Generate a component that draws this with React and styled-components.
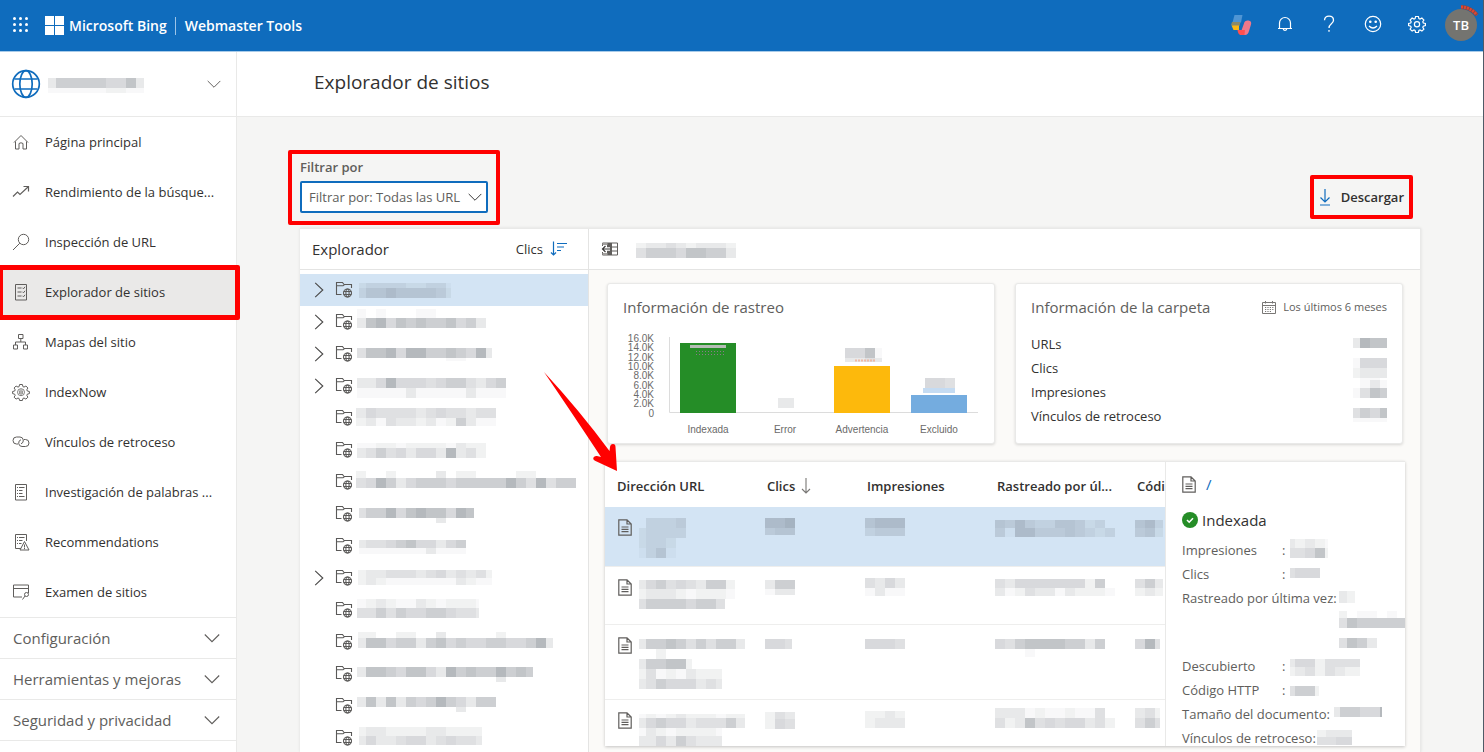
import React from "react";
import styled, { createGlobalStyle, css } from "styled-components";

const blue = "#0f6cbd";
const red = "#ff0000";
const line = "#e9e9e8";

const GlobalStyle = createGlobalStyle`
  * { box-sizing: border-box; }
  body {
    margin: 0;
    font-family: "Open Sans", "Noto Sans", sans-serif;
    font-size: 13px;
    line-height: 20px;
    color: #323130;
    background: #f5f5f4;
  }
  button, select { font: inherit; color: inherit; }
  svg { display: block; flex: none; }
`;

/* ---------- redacted values, drawn as mosaics ---------- */

const shades = [0, 0.04, 0.08, 0.13, 0.18, 0.22, 0.28, 0.34, 0.41, 0.48];

/* rows: [y, height, one shade digit per 10px cell, optional end x] */
function Mosaic({ width, height, start = 0, end, rows, x, y }) {
  return (
    <svg width={width} height={height} x={x} y={y} aria-hidden="true" shapeRendering="crispEdges">
      {rows.flatMap(([top, h, cells, rowEnd]) =>
        [...cells].map((c, i) => {
          const left = Math.max(i * 10, start);
          const right = Math.min(i * 10 + 10, rowEnd ?? end ?? width);
          if (c === "0" || right <= left) return null;
          return (
            <rect key={`${top}-${i}`} x={left} y={top} width={right - left} height={h}
              fill="#4c545e" fillOpacity={shades[+c]} />
          );
        })
      )}
    </svg>
  );
}

/* ---------- icons ---------- */

function Icon({ size = 18, color = "#605e5c", w = 1, children }) {
  return (
    <svg width={size} height={size} viewBox="0 0 18 18" fill="none" stroke={color} strokeWidth={w} aria-hidden="true">
      {children}
    </svg>
  );
}

const gearPath =
  "M7.6 1.5h2.8l.5 2.1 1.1.5 1.9-1.1 2 2-1.1 1.8.5 1.2 2.1.5v2.1l-2.1.6-.5 1.1 1.1 1.9-2 1.9-1.9-1.1-1.1.5-.5 2h-2.8l-.5-2-1.1-.5-1.9 1.1-2-1.9 1.1-1.9-.5-1.1-2.1-.6V8.5l2.1-.5.5-1.2L2.1 5l2-2L6 4.1l1.1-.5z";

const HomeIcon = () => (
  <Icon><path d="M2 9.5 9 2.5l7 7M3.5 8.5v7.500h3.500v-5.500q2-1.500 4 0v5.500h3.500V8.500" /></Icon>
);
const TrendIcon = () => (
  <Icon w={1.2}><path d="M1 13.500 5.500 9l2.500 2.500L16 4M11.500 3.500H16.500V8.500" /></Icon>
);
const SearchIcon = () => (
  <Icon><circle cx="11.5" cy="6.5" r="5.2" /><path d="M7.800 10.200 1 17" /></Icon>
);
const ChecklistIcon = () => (
  <Icon>
    <path d="M3.500 1.500h11v15.500h-11z" />
    <path d="M5.500 5h4M5.500 9h4M5.500 13h4" />
    <path d="m10.500 4.800 1 1 1.500-2M10.500 8.800l1 1 1.500-2M10.500 12.800l1 1 1.500-2" />
  </Icon>
);
const SitemapIcon = () => (
  <Icon>
    <path d="M6.500 1.500h4.500v4H6.500zM1.500 12h4v4h-4zM11.500 12h4v4h-4zM8.800 5.500v3.500M3.500 12V9h10v3" />
  </Icon>
);
const IndexNowIcon = () => (
  <Icon>
    <path d={gearPath} />
    <circle cx="9" cy="9.200" r="3.500" strokeWidth="0.8" />
    <path d="M9 6.500v5.500M7.700 7.500v3.500M10.300 7.500v3.500" strokeWidth="0.8" />
  </Icon>
);
const LinkIcon = () => (
  <Icon>
    <path d="M6 11H4.500a3.500 3.500 0 0 1 0-7H8a3.500 3.500 0 0 1 1 6.800" />
    <path d="M12 6.500h1.500a3.500 3.500 0 0 1 0 7H10a3.500 3.500 0 0 1-1-6.800" />
  </Icon>
);
const KeywordIcon = () => (
  <Icon>
    <path d="M3.500 1.500h11v15.500h-11z" />
    <path d="M5 4.500h1M7 4.500h5.500M5 7.500h1M7 7.500h3.500M5 10.500h1M7 10.500h3.500M5 13.500h1M7 13.500h5.500" />
  </Icon>
);
const RecommendIcon = () => (
  <Icon>
    <path d="M9 15.500H3.500v-14h11V8" />
    <path d="M5 4.500h1M7 4.500h5.500M5 7.500h1M7 7.500h3.500M5 10.500h1M7 10.500h2.500" />
    <path d="m12.500 8.500 4.500 8.500H8zM12.500 11.500v3M12.500 15v1.200" />
  </Icon>
);
const ScanIcon = () => (
  <Icon>
    <path d="M10 14H1.500V2h15v8M1.500 5.500h15" />
    <circle cx="14.500" cy="11.500" r="2" /><path d="m13 13-2.500 3.500" />
  </Icon>
);
const Chevron = ({ dir = "down", color = "#605e5c", width = 16 }) => (
  <svg width={width} height="16" viewBox="0 0 16 16" fill="none" stroke={color} strokeWidth="1.1" aria-hidden="true">
    <path d={dir === "down" ? "M.8 4.500 8 11.700l7.200-7.200" : "M4.200.8 11.800 8l-7.600 7.200"} />
  </svg>
);
const GlobeIcon = () => (
  <svg width="30" height="30" viewBox="0 0 30 30" fill="none" stroke={blue} strokeWidth="1.700" aria-hidden="true">
    <circle cx="15" cy="15" r="13.300" />
    <ellipse cx="15" cy="15" rx="6.200" ry="13.300" />
    <path d="M3.500 10h23M3.500 20h23" />
  </svg>
);
const FolderIcon = () => (
  <svg width="18" height="18" viewBox="0 0 18 18" fill="none" stroke="#5a5958" strokeWidth="1.100" aria-hidden="true">
    <path d="M6.500 13.500H1.500V1.500h6l1.500 2h7.500V7M1.500 4.800H8L9.500 3.500" />
    <circle cx="12.500" cy="12" r="4" />
    <ellipse cx="12.500" cy="12" rx="1.600" ry="4" />
    <path d="M8.700 10.500h7.600M8.700 13.500h7.600" />
  </svg>
);
const DocIcon = () => (
  <svg width="14" height="17" viewBox="0 0 14 17" fill="none" stroke="#605e5c" strokeWidth="1.200" aria-hidden="true">
    <path d="M.8.800H9l4.200 4.200v11.200H.8zM9 .800V5h4.200M3.500 8h7M3.500 10.300h7M3.500 12.600h7" />
  </svg>
);
const BellIcon = () => (
  <Icon color="#fff" w={1.2}>
    <path d="M3.500 13.500V8a5.500 5.500 0 0 1 11 0v5.500M2 13.500h14M7.200 14a1.900 1.900 0 0 0 3.600 0" />
  </Icon>
);
const HelpIcon = () => (
  <Icon color="#fff" w={1.3}>
    <path d="M4.500 5.200C4.700 2.500 6.500 1.200 9 1.200s4.500 1.600 4.500 4C13.500 8.800 9 8.800 9 13M9 15v1.700" />
  </Icon>
);
const SmileIcon = () => (
  <Icon color="#fff" w={1.2}>
    <circle cx="9" cy="9" r="7.700" />
    <path d="M5 11q4 4 8 0" />
    <circle cx="6.300" cy="6.800" r=".7" fill="#fff" /><circle cx="11.700" cy="6.800" r=".7" fill="#fff" />
  </Icon>
);
const GearIcon = () => (
  <Icon color="#fff" w={1.2}>
    <path d={gearPath} /><circle cx="9" cy="9.200" r="2.600" />
  </Icon>
);
const CopilotIcon = () => (
  <svg width="22" height="22" viewBox="0 0 22 22" aria-hidden="true">
    <path d="M4.500 2h8L11 9.500H2.500z" fill="#4f95d4" />
    <path d="M2 9h8.500l-1 4H3L1 12z" fill="#8a8a6a" />
    <path d="M1.500 12.500h7.500v4.500H3.500z" fill="#fdb813" />
    <path d="M12 16l2.500-7q1-2 4-1.500 3.500.5 2.500 4l-2 6.500q-1 4-4 4h-5z" fill="#f0788a" />
    <path d="M7.500 17h7.500l-.5 5H11q-3 0-3.500-5z" fill="#ff4f4f" />
  </svg>
);
const SortIcon = () => (
  <svg width="18" height="16" viewBox="0 0 18 16" fill="none" stroke={blue} strokeWidth="1.200" aria-hidden="true">
    <path d="M3.500.500v13M1 11.500l2.500 2.500L6 11.500M7 2.500h10M7 6h7M7 9.500h4" />
  </svg>
);
const CollapseIcon = () => (
  <svg width="18" height="14" viewBox="0 0 18 14" fill="none" aria-hidden="true">
    <path d="M1.500 4V1h15v12h-15v-3" stroke="#605e5c" />
    <path d="M6 1h5v12H6z" fill="#605e5c" />
    <path d="M1.500 1h5v2h-5zM1.500 11h5v2h-5z" fill="#a19f9d" />
    <path d="M9 7H1.500" stroke="#fff" strokeWidth="3.500" />
    <path d="M9 7H1.800M4.500 4 1.500 7l3 3" stroke="#3b3a39" strokeWidth="1.200" />
    <path d="M11 5h5.500M11 9h5.500" stroke="#605e5c" />
  </svg>
);
const CalendarIcon = () => (
  <svg width="14" height="13" viewBox="0 0 14 13" fill="none" stroke="#797775" aria-hidden="true">
    <path d="M.5 1.500h13v11H.500zM.5 4.500h13M3.500 0v2.500M10.500 0v2.500" />
    <path d="M3 6.500h8.500M3 8.500h8.500M3 10.500h6" strokeDasharray="1.200 1.200" />
  </svg>
);
const DownloadIcon = () => (
  <svg width="12" height="17" viewBox="0 0 12 17" fill="none" stroke={blue} strokeWidth="1.200" aria-hidden="true">
    <path d="M6 0v12.500M1.500 8.500 6 13l4.500-4.500M1 16h10" />
  </svg>
);
const ArrowDown = () => (
  <svg width="10" height="16" viewBox="0 0 10 16" fill="none" stroke="#797775" strokeWidth="1.100" aria-hidden="true">
    <path d="M5 0v15M1 11l4 4 4-4" />
  </svg>
);
const CheckIcon = () => (
  <svg width="16" height="16" viewBox="0 0 16 16" fill="none" aria-hidden="true">
    <circle cx="8" cy="8" r="8" fill="#258d27" />
    <path d="m5 8 2.200 2.200L11 6.200" stroke="#fff" strokeWidth="1.600" />
  </svg>
);

/* ---------- shell ---------- */

const Shell = styled.div`
  height: 100vh;
  display: flex;
  flex-direction: column;
  overflow: hidden;
  border-right: 1px solid #4f5a66;
`;
const TopBar = styled.header`
  flex: none;
  height: 52px;
  padding: 0 6px 0 13px;
  display: flex;
  align-items: center;
  color: #fff;
  background: ${blue};
  border-bottom: 1px solid #a8cbe9;
`;
const BarButton = styled.button`
  display: flex;
  align-items: center;
  justify-content: center;
  width: ${(p) => p.$width ?? 44}px;
  height: 48px;
  padding: 0 0 3px;
  border: 0;
  background: none;
`;
const Brand = styled.a`
  display: flex;
  align-items: center;
  gap: 5px;
  margin-left: 17px;
  color: #fff;
  font-size: 14px;
  font-weight: 600;
  text-decoration: none;
`;
const Product = styled.span`
  margin-left: 3px;
  padding-left: 9px;
  border-left: 1px solid #9cc4e8;
  line-height: 18px;
`;
const BarTools = styled.div`
  margin-left: auto;
  display: flex;
  align-items: center;
`;
const Avatar = styled.button`
  position: relative;
  width: 32px;
  height: 32px;
  margin: 0 0 2px 6px;
  padding: 0;
  border: 0;
  border-radius: 50%;
  background: #747470;
  color: #fff;
  font-weight: 600;
`;
const AvatarTag = styled.svg`
  position: absolute;
  top: -5px;
  right: -3px;
`;
const Body = styled.div`
  flex: 1;
  min-height: 0;
  display: flex;
`;

/* ---------- side navigation ---------- */

const Side = styled.aside`
  flex: none;
  width: 237px;
  background: #fff;
  border-right: 1px solid ${line};
`;
const SitePicker = styled.button`
  width: 100%;
  height: 65px;
  padding: 0 15px 0 11px;
  display: flex;
  align-items: center;
  gap: 5px;
  border: 0;
  border-bottom: 1px solid ${line};
  background: #fff;
`;
const Push = styled.span`
  margin-left: auto;
`;
const NavLink = styled.a`
  position: relative;
  display: flex;
  align-items: center;
  gap: 15px;
  height: 50px;
  padding: 0 12px;
  color: #323130;
  text-decoration: none;
  ${(p) => p.$active && css`background: #eae9e8;`}
`;
const Highlight = styled.span`
  position: absolute;
  z-index: 2;
  inset: ${(p) => p.$inset};
  border: ${(p) => p.$border}px solid ${red};
  border-radius: 2px;
  pointer-events: none;
`;
const NavGroup = styled.button`
  width: 100%;
  height: 41px;
  padding: 0 16px 0 13px;
  display: flex;
  align-items: center;
  justify-content: space-between;
  border: 0;
  border-top: 1px solid ${line};
  background: #fff;
  color: #605e5c;
  font-size: 15px;
  &:last-child { height: 42px; border-bottom: 1px solid ${line}; }
`;

/* ---------- main ---------- */

const Main = styled.main`
  flex: 1;
  min-width: 0;
  display: flex;
  flex-direction: column;
`;
const TitleBar = styled.div`
  flex: none;
  height: 65px;
  padding: 0 77px 4px;
  display: flex;
  align-items: center;
  background: #fff;
  border-bottom: 1px solid ${line};
`;
const Title = styled.h1`
  margin: 0;
  font-size: 19px;
  font-weight: 400;
`;
const Content = styled.div`
  flex: 1;
  min-height: 0;
  padding: 38px 62px 0 63px;
  display: flex;
  flex-direction: column;
`;
const Toolbar = styled.div`
  flex: none;
  display: flex;
  justify-content: space-between;
  align-items: flex-end;
  height: 73px;
  padding-bottom: 15px;
`;
const Filter = styled.div`
  position: relative;
  display: grid;
  gap: 4px;
  width: 188px;
  color: #605e5c;
`;
const FilterLabel = styled.label`
  font-weight: 600;
`;
const SelectBox = styled.div`
  display: grid;
  align-items: center;
  > * { grid-area: 1 / 1; }
  > svg { justify-self: end; margin-right: 6px; pointer-events: none; }
`;
const Select = styled.select`
  appearance: none;
  width: 100%;
  height: 32px;
  padding: 0 24px 0 7px;
  border: 2px solid ${blue};
  border-radius: 2px;
  background: #fff;
  outline: 0;
`;
const Download = styled.button`
  position: relative;
  display: flex;
  align-items: center;
  gap: 10px;
  height: 32px;
  margin-right: 17px;
  padding: 0;
  border: 0;
  background: none;
  font-weight: 600;
`;
const Panels = styled.div`
  flex: 1;
  min-height: 0;
  display: flex;
  background: #fbfaf8;
  border: solid ${line};
  border-width: 1px 1px 0 0;
  box-shadow: 0 0 3px rgba(0, 0, 0, 0.1);
`;
const PanelHead = styled.div`
  flex: none;
  display: flex;
  align-items: center;
  height: 41px;
  padding: 0 12px;
  background: #fff;
  border-bottom: 1px solid #e4e4e3;
`;
const Explorer = styled.section`
  flex: none;
  width: 289px;
  background: #fff;
  border-right: 1px solid #e4e4e3;
  overflow: hidden;
`;
const ExplorerTitle = styled.h2`
  margin: 0;
  font-size: 15px;
  font-weight: 400;
`;
const SortButton = styled.button`
  display: flex;
  align-items: center;
  gap: 7px;
  margin-left: auto;
  padding: 0 8px 0 0;
  border: 0;
  background: none;
`;
const Tree = styled.ul`
  margin: 0;
  padding: 4px 0 0;
  list-style: none;
`;
const TreeRow = styled.li`
  display: grid;
  grid-template-columns: 16px 17px 1fr;
  column-gap: 4px;
  align-items: center;
  height: 32px;
  padding-left: 11px;
  background: ${(p) => (p.$active ? "#d3e4f4" : "#fff")};
`;
const TreeIcon = styled.span`
  margin-left: 4px;
`;
const TreeName = styled.span`
  padding-left: 4px;
`;
const Right = styled.section`
  flex: 1;
  min-width: 0;
  display: flex;
  flex-direction: column;
`;
const HeadMosaic = styled.span`
  margin-left: 17px;
`;
const Cards = styled.div`
  flex: none;
  display: flex;
  gap: 20px;
  padding: 13px 17px 17px 18px;
`;
const Card = styled.section`
  flex: 1 1 0;
  min-width: 0;
  height: 161px;
  padding: 13px 15px;
  background: #fff;
  border: 1px solid ${line};
  border-radius: 3px;
  box-shadow: 0 1px 3px rgba(0, 0, 0, 0.14);
`;
const CardHead = styled.div`
  display: flex;
  align-items: center;
  justify-content: space-between;
  color: #605e5c;
`;
const CardTitle = styled.h2`
  margin: 0;
  font-size: 15px;
  font-weight: 400;
`;
const Period = styled.span`
  display: flex;
  align-items: center;
  gap: 7px;
  font-size: 11px;
`;
const Stats = styled.dl`
  margin: 15px 0 0;
`;
const Stat = styled.div`
  display: flex;
  justify-content: space-between;
  height: 24px;
  line-height: 24px;
`;
const StatValue = styled.dd`
  margin: 0;
`;
const Chart = styled.svg`
  margin-top: 11px;
  font-family: "Liberation Sans", sans-serif;
  font-size: 10px;
`;

/* ---------- bottom card ---------- */

const Lower = styled.div`
  position: relative;
  flex: 1;
  min-height: 0;
  margin: 0 15px 6px 16px;
  display: flex;
`;
const LowerCard = styled.div`
  flex: 1;
  min-width: 0;
  display: flex;
  overflow: hidden;
  background: #fff;
  border-top: 1px solid ${line};
  box-shadow: 0 1px 3px rgba(0, 0, 0, 0.22);
`;
const TableArea = styled.div`
  flex: 1;
  min-width: 0;
  overflow: hidden;
`;
const Table = styled.table`
  width: 100%;
  table-layout: fixed;
  border-collapse: collapse;
`;
const Th = styled.th`
  width: ${(p) => (p.$width ? `${p.$width}px` : "auto")};
  height: 45px;
  padding: 2px 0 0 12px;
  overflow: hidden;
  text-align: left;
  white-space: nowrap;
  font-weight: 600;
`;
const ThInner = styled.span`
  display: flex;
  align-items: center;
  gap: 6px;
`;
const Tr = styled.tr`
  height: ${(p) => p.$height}px;
  border-bottom: 1px solid #eeeeed;
  background: ${(p) => (p.$active ? "#d3e4f4" : "#fff")};
`;
const Td = styled.td`
  padding: 0 0 0 10px;
  overflow: hidden;
  vertical-align: top;
`;
const UrlCell = styled.div`
  display: flex;
  gap: 4px;
  padding-left: 3px;
  > svg:first-child { margin-top: 12px; }
`;
const Detail = styled.aside`
  flex: none;
  width: 240px;
  padding: 11px 0 0 16px;
  border-left: 1px solid ${line};
  color: #605e5c;
`;
const DetailUrl = styled.div`
  display: flex;
  align-items: center;
  gap: 10px;
  height: 22px;
`;
const DetailLink = styled.a`
  color: ${blue};
  font-size: 15px;
  text-decoration: none;
`;
const DetailStatus = styled.h3`
  display: flex;
  align-items: center;
  gap: 4px;
  height: 22px;
  margin: 14px 0 7px;
  color: #323130;
  font-size: 15px;
  font-weight: 400;
`;
const Facts = styled.dl`
  margin: 0;
`;
const Fact = styled.div`
  display: flex;
  height: ${(p) => p.$height}px;
  line-height: 24px;
  white-space: nowrap;
`;
const FactName = styled.dt`
  min-width: ${(p) => (p.$short ? 100 : 0)}px;
`;
const FactValue = styled.dd`
  margin: 0;
`;
const Pointer = styled.svg`
  position: absolute;
  z-index: 3;
  left: -65px;
  top: -92px;
  pointer-events: none;
`;

/* ---------- data ---------- */

const nav = [
  ["Página principal", HomeIcon],
  ["Rendimiento de la búsque...", TrendIcon],
  ["Inspección de URL", SearchIcon],
  ["Explorador de sitios", ChecklistIcon],
  ["Mapas del sitio", SitemapIcon],
  ["IndexNow", IndexNowIcon],
  ["Vínculos de retroceso", LinkIcon],
  ["Investigación de palabras ...", KeywordIcon],
  ["Recommendations", RecommendIcon],
  ["Examen de sitios", ScanIcon],
];
const groups = ["Configuración", "Herramientas y mejoras", "Seguridad y privacidad"];

const folders = [
  { open: true, active: true, start: 3, end: 95, rows: [[9, 5, "2333322331"], [14, 10, "3556555542"]] },
  { open: true, start: 1, end: 130, rows: [[3, 9, "1010001100"], [12, 10, "3785767667563"]] },
  { open: true, start: 1, end: 136, rows: [[10, 10, "47785886676583"], [20, 3, "00000000011"]] },
  { open: true, start: 1, end: 150, rows: [[8, 10, "335855545664356"], [18, 10, "111113111113111"]] },
  { start: 0, end: 140, rows: [[6, 10, "35444434544344"], [16, 8, "23143323126311"]] },
  { start: 1, end: 130, rows: [[9, 5, "1122122221322"], [14, 10, "3464535538342"]] },
  { start: 0, end: 220, rows: [[5, 7, "200200003022000022"], [12, 10, "4586356665666668648466"]] },
  { start: 3, end: 118, rows: [[10, 10, "466857877587"], [20, 5, "000000003"]] },
  { start: 3, end: 110, rows: [[10, 8, "34456755356"], [18, 6, "11111113111"]] },
  { open: true, start: 2, end: 136, rows: [[8, 8, "23344434534342"], [16, 7, "23211111113211"]] },
  { start: 1, end: 123, rows: [[5, 9, "1232113212221"], [14, 10, "4464655665443"]] },
  { start: 2, end: 197, rows: [[6, 6, "22002200300000200"], [12, 10, "37756636756556655683"]] },
  { start: 1, end: 177, rows: [[9, 10, "377657753867668676"], [19, 5, "000000000000003"]] },
  { start: 1, end: 140, rows: [[7, 10, "37373656865366"], [17, 5, "00000000003"]] },
  { start: 3, end: 126, rows: [[5, 9, "2332222332222"], [14, 9, "3533455345443"]] },
];

const urls = [
  {
    height: 59, active: true,
    url: [[11, 10, "03334", 50], [21, 10, "23333", 50], [31, 10, "2332", 40], [41, 10, "1351", 40]],
    clicks: [[11, 10, "667"], [21, 7, "455"]],
    views: [[11, 10, "5666"], [21, 8, "3444"]],
    crawled: [[13, 8, "54643355423", 110], [21, 9, "416644454323"]],
    code: [[13, 8, "563"], [21, 9, "452"]],
  },
  {
    height: 58,
    url: [[13, 9, "3564543662", 99], [22, 10, "2333212221", 99], [32, 10, "466665664", 89]],
    clicks: [[13, 9, "366"], [22, 6, "133"]],
    views: [[11, 10, "4353"], [21, 8, "1311"]],
    crawled: [[12, 9, "43555555526", 110], [21, 8, "312433132221"]],
    code: [[12, 9, "463"], [21, 8, "232"]],
  },
  {
    height: 75,
    url: [[14, 10, "36676464663"], [24, 10, "002"], [34, 10, "366772", 56], [44, 10, "241213222", 86], [54, 10, "346555343", 86]],
    clicks: [[14, 10, "554", 27]],
    views: [[14, 10, "5554"]],
    crawled: [[14, 10, "54677776636", 110], [24, 8, "0001"]],
    code: [[14, 10, "584", 25]],
  },
  {
    height: 75,
    url: [[14, 4, "12123222122"], [18, 10, "35655344463"], [28, 8, "132122221", 86], [36, 10, "335364333", 86]],
    clicks: [[12, 7, "243"], [19, 10, "254"]],
    views: [[11, 7, "2232"], [18, 10, "2333"]],
    crawled: [[8, 10, "33312112114", 110], [18, 10, "423745455342"]],
    code: [[8, 10, "342", 25], [18, 10, "464", 25]],
  },
];

const folderStats = [
  ["URLs", [[6, 10, "3877"]]],
  ["Clics", [[2, 10, "1555"], [12, 10, "2333"], [22, 2, "0110"]]],
  ["Impresiones", [[0, 8, "0131"], [8, 10, "1476"]]],
  ["Vínculos de retroceso", [[4, 10, "4657"], [14, 4, "1111"]]],
];

const facts = [
  { name: "Impresiones", short: true, h: 24, start: 5, rows: [[1, 9, "32321", 43], [10, 10, "44572", 43]] },
  { name: "Clics", short: true, h: 24, start: 5, rows: [[6, 10, "4555", 35]] },
  {
    name: "Rastreado por última vez", h: 68, start: 2,
    rows: [[5, 12, "32", 18], [25, 7, "201101"], [32, 10, "4766666"], [52, 10, "4763", 40]],
  },
  { name: "Descubierto", short: true, h: 24, start: 5, rows: [[5, 8, "35524444", 75], [13, 9, "23424322", 75]] },
  { name: "Código HTTP", short: true, h: 24, start: 5, rows: [[8, 10, "4662", 34]] },
  { name: "Tamaño del documento", h: 24, start: 4, rows: [[5, 10, "366558", 52]] },
  { name: "Vínculos de retroceso", h: 24, start: 1, rows: [[4, 7, "2333", 36], [11, 8, "4455", 36]] },
];

const ticks = ["16.0K", "14.0K", "12.0K", "10.0K", "8.0K", "6.0K", "4.0K", "2.0K", "0"];
const tickY = [14, 23, 33, 42, 51, 61, 70, 79, 89];
const bars = [
  { label: "Indexada", x: 57, top: 15, color: "#258d27" },
  { label: "Error", x: 134, top: 85, color: "#c00" },
  { label: "Advertencia", x: 211, top: 38, color: "#fdb90c" },
  { label: "Excluido", x: 288, top: 67, color: "#74acdf" },
];

function CrawlChart() {
  return (
    <Chart width="356" height="112" role="img" aria-label="Información de rastreo">
      {ticks.map((t, i) => (
        <text key={t} x="31" y={tickY[i]} textAnchor="end" fill="#6b6a69">{t}</text>
      ))}
      <path d="M46.500 9v75.500H355" fill="none" stroke="#dcdcdc" />
      {bars.map((b) => (
        <g key={b.label}>
          <rect x={b.x} y={b.top} width="56" height={85 - b.top} fill={b.color} />
          <text x={b.x + 28} y="105" textAnchor="middle" fill="#6b6a69">{b.label}</text>
        </g>
      ))}
      <path d="M67 18.500h36" stroke="#b5bdb5" strokeWidth="3" />
      <path d="M73 23.500h30M73 26.500h30" stroke="#8a7a8a" strokeWidth="1" strokeDasharray="1 2" />
      <Mosaic x={155} y={70} width={16} height={10} rows={[[0, 10, "33"]]} />
      <Mosaic x={222} y={20} width={37} height={15} rows={[[0, 10, "5571", 37], [10, 4, "3343"]]} />
      <path d="M232 32.500h21" stroke="#f0b9a4" strokeWidth="2" strokeDasharray="2 1" />
      <Mosaic x={302} y={50} width={30} height={15} rows={[[0, 15, "554"]]} />
      <path d="M300 62.500h32" stroke="#c4dbf2" strokeWidth="5" />
    </Chart>
  );
}

export default function App() {
  return (
    <Shell>
      <GlobalStyle />
      <TopBar>
        <BarButton $width={15} aria-label="Aplicaciones">
          <svg width="15" height="15" fill="#fff" aria-hidden="true">
            {[0, 6, 12].flatMap((y) => [0, 6, 12].map((x) => <circle key={`${x}-${y}`} cx={x + 1.5} cy={y + 1.5} r="1.5" />))}
          </svg>
        </BarButton>
        <Brand href="#">
          <svg width="19" height="19" fill="#fff" aria-hidden="true">
            <path d="M0 0h9v9H0zM10 0h9v9h-9zM0 10h9v9H0zM10 10h9v9h-9z" />
          </svg>
          <span>Microsoft Bing</span>
          <Product>Webmaster Tools</Product>
        </Brand>
        <BarTools>
          <BarButton aria-label="Copilot"><CopilotIcon /></BarButton>
          <BarButton aria-label="Notificaciones"><BellIcon /></BarButton>
          <BarButton aria-label="Ayuda"><HelpIcon /></BarButton>
          <BarButton aria-label="Comentarios"><SmileIcon /></BarButton>
          <BarButton aria-label="Ajustes"><GearIcon /></BarButton>
          <Avatar>
            TB
            <AvatarTag width="20" height="13" fill="none" aria-hidden="true">
              <path d="M1 3q9 0 16 8" stroke="#7b4a4a" strokeWidth="4" />
              <path d="M1 3q9 0 16 8" stroke="#e0452f" strokeWidth="3" strokeDasharray="2 1" />
            </AvatarTag>
          </Avatar>
        </BarTools>
      </TopBar>
      <Body>
        <Side>
          <SitePicker aria-label="Sitio">
            <GlobeIcon />
            <Mosaic width={98} height={18} start={2} rows={[[3, 10, "3666665573"], [13, 5, "1111112211"]]} />
            <Push><Chevron width={14} /></Push>
          </SitePicker>
          <nav>
            {nav.map(([label, I]) => {
              const active = label === "Explorador de sitios";
              return (
                <NavLink key={label} href="#" $active={active}>
                  <I />
                  {label}
                  {active && <Highlight $inset="-2px -4px -3px -2px" $border={5} />}
                </NavLink>
              );
            })}
          </nav>
          <div>
            {groups.map((g) => (
              <NavGroup key={g}>{g}<Chevron /></NavGroup>
            ))}
          </div>
        </Side>
        <Main>
          <TitleBar><Title>Explorador de sitios</Title></TitleBar>
          <Content>
            <Toolbar>
              <Filter>
                <FilterLabel htmlFor="filter">Filtrar por</FilterLabel>
                <SelectBox>
                  <Select id="filter" defaultValue="all">
                    <option value="all">Filtrar por: Todas las URL</option>
                  </Select>
                  <Chevron color="#323130" width={14} />
                </SelectBox>
                <Highlight $inset="-7px -12px -12px -12px" $border={4} />
              </Filter>
              <Download>
                <DownloadIcon />
                Descargar
                <Highlight $inset="-6px -9px -6px -9px" $border={4} />
              </Download>
            </Toolbar>
            <Panels>
              <Explorer>
                <PanelHead>
                  <ExplorerTitle>Explorador</ExplorerTitle>
                  <SortButton>Clics<SortIcon /></SortButton>
                </PanelHead>
                <Tree>
                  {folders.map((f, i) => (
                    <TreeRow key={i} $active={f.active}>
                      <span>{f.open && <Chevron dir="right" color="#4a4948" />}</span>
                      <TreeIcon><FolderIcon /></TreeIcon>
                      <TreeName>
                        <Mosaic width={221} height={32} start={f.start} end={f.end} rows={f.rows} />
                      </TreeName>
                    </TreeRow>
                  ))}
                </Tree>
              </Explorer>
              <Right>
                <PanelHead>
                  <CollapseIcon />
                  <HeadMosaic>
                    <Mosaic width={100} height={20} rows={[[4, 5, "2334323332"], [9, 10, "4666577663"]]} />
                  </HeadMosaic>
                </PanelHead>
                <Cards>
                  <Card>
                    <CardHead><CardTitle>Información de rastreo</CardTitle></CardHead>
                    <CrawlChart />
                  </Card>
                  <Card>
                    <CardHead>
                      <CardTitle>Información de la carpeta</CardTitle>
                      <Period><CalendarIcon />Los últimos 6 meses</Period>
                    </CardHead>
                    <Stats>
                      {folderStats.map(([name, rows]) => (
                        <Stat key={name}>
                          <dt>{name}</dt>
                          <StatValue><Mosaic width={37} height={24} start={3} rows={rows} /></StatValue>
                        </Stat>
                      ))}
                    </Stats>
                  </Card>
                </Cards>
                <Lower>
                  <LowerCard>
                    <TableArea>
                      <Table>
                        <thead>
                          <tr>
                            <Th>Dirección URL</Th>
                            <Th $width={100}><ThInner>Clics<ArrowDown /></ThInner></Th>
                            <Th $width={130}>Impresiones</Th>
                            <Th $width={140}>Rastreado por úl...</Th>
                            <Th $width={40}>Códi</Th>
                          </tr>
                        </thead>
                        <tbody>
                          {urls.map((u, i) => (
                            <Tr key={i} $height={u.height} $active={u.active}>
                              <Td>
                                <UrlCell>
                                  <DocIcon />
                                  <Mosaic width={109} height={u.height - 5} start={3} rows={u.url} />
                                </UrlCell>
                              </Td>
                              <Td><Mosaic width={31} height={36} rows={u.clicks} /></Td>
                              <Td><Mosaic width={40} height={36} rows={u.views} /></Td>
                              <Td><Mosaic width={120} height={36} rows={u.crawled} /></Td>
                              <Td><Mosaic width={28} height={36} rows={u.code} /></Td>
                            </Tr>
                          ))}
                        </tbody>
                      </Table>
                    </TableArea>
                    <Detail>
                      <DetailUrl><DocIcon /><DetailLink href="#">/</DetailLink></DetailUrl>
                      <DetailStatus><CheckIcon />Indexada</DetailStatus>
                      <Facts>
                        {facts.map((f) => (
                          <Fact key={f.name} $height={f.h}>
                            <FactName $short={f.short}>{f.name}</FactName>:
                            <FactValue>
                              <Mosaic width={f.short ? 76 : 68} height={f.h} start={f.start} rows={f.rows} />
                            </FactValue>
                          </Fact>
                        ))}
                      </Facts>
                    </Detail>
                  </LowerCard>
                  <Pointer width="82" height="106" fill={red} aria-hidden="true">
                    <path d="M4 3Q40 42 69.500 82L70 78q.5-3 3-3 2.500 0 2.500 3L77 102 55.500 92q-3-1.500-2-3.500 1-2 3.500-1.500L61 88Q36 50 4 3Z" />
                  </Pointer>
                </Lower>
              </Right>
            </Panels>
          </Content>
        </Main>
      </Body>
    </Shell>
  );
}
